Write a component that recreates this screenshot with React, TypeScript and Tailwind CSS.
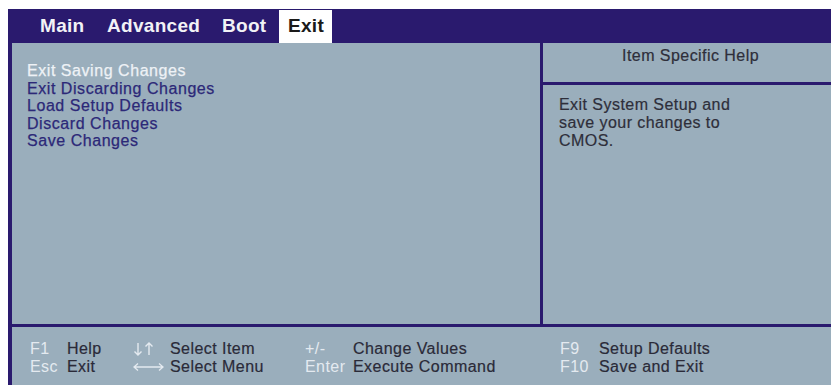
const navy = "bg-[#2a1a6e]"

const menuItems = [
  "Exit Saving Changes",
  "Exit Discarding Changes",
  "Load Setup Defaults",
  "Discard Changes",
  "Save Changes",
]

function UpDown() {
  return (
    <svg width="22" height="14" viewBox="0 0 22 14" fill="none" stroke="#e4eaf0" strokeWidth="1.4">
      <path d="M5 1v12M1.5 9.5L5 13l3.5-3.5" />
      <path d="M16 13V1M12.5 4.5L16 1l3.5 3.5" />
    </svg>
  )
}

function LeftRight() {
  return (
    <svg width="31" height="10" viewBox="0 0 31 10" fill="none" stroke="#e4eaf0" strokeWidth="1.3">
      <path d="M1 5h29M5 1.5L1 5l4 3.5M26 1.5L30 5l-4 3.5" />
    </svg>
  )
}

const keyGroups = [
  { w: "w-[103px]", kw: "w-[37px]", rows: [["F1", "Help"], ["Esc", "Exit"]] },
  { w: "w-[172px]", kw: "w-[37px]", rows: [["ud", "Select Item"], ["lr", "Select Menu"]] },
  { w: "w-[255px]", kw: "w-[48px]", rows: [["+/-", "Change Values"], ["Enter", "Execute Command"]] },
  { w: "w-[220px]", kw: "w-[39px]", rows: [["F9", "Setup Defaults"], ["F10", "Save and Exit"]] },
]

export default function App() {
  return (
    <div className="w-[831px] h-[385px] bg-white pt-[9px] pl-[8px] flex flex-col overflow-hidden font-['Liberation_Sans',Arial,sans-serif]">
      {/* tab bar */}
      <div className={`h-[34px] ${navy} flex items-end pl-[32px] text-[19px] font-bold tracking-[0.3px]`}>
        <div className="flex items-center h-[33px] text-[#f2f2f6]">
          <span className="w-[67px]">Main</span>
          <span className="w-[115px]">Advanced</span>
          <span className="w-[57px]">Boot</span>
        </div>
        <div className="h-[33px] w-[53px] bg-white text-[#1a1a1a] flex items-center pl-[9px]">Exit</div>
      </div>

      <div className="flex-1 flex flex-col border-l-[4px] border-[#2a1a6e] bg-[#9aaebc]">
        {/* main panels */}
        <div className="h-[284px] flex border-b-[3px] border-[#2a1a6e]">
          <div className="w-[528px] pt-[19px] pl-[15px] text-[16px] leading-[17.5px] tracking-[0.55px] text-[#2c2878] [-webkit-text-stroke:0.25px_#2c2878]">
            {menuItems.map((item, i) => (
              <div key={item} className={i === 0 ? "text-[#eef2f6] [-webkit-text-stroke:0.25px_#eef2f6]" : ""}>
                {item}
              </div>
            ))}
          </div>
          <div className="flex-1 border-l-[3px] border-[#2a1a6e] text-[16px] tracking-[0.45px] text-[#2e2e3a] [-webkit-text-stroke:0.2px_#2e2e3a]">
            <div className="h-[42px] border-b-[3px] border-[#2a1a6e] pl-[79px] pt-[4px] leading-[18px]">
              Item Specific Help
            </div>
            <div className="pl-[16px] pt-[11px] leading-[18px]">
              <div>Exit System Setup and</div>
              <div>save your changes to</div>
              <div>CMOS.</div>
            </div>
          </div>
        </div>

        {/* key help footer */}
        <div className="flex pl-[18px] pt-[13px] text-[16px] leading-[18px] tracking-[0.45px]">
          {keyGroups.map((g, gi) => (
            <div key={gi} className={`${g.w} flex flex-col`}>
              {g.rows.map(([k, label]) => (
                <div key={k} className="flex items-center h-[18px]">
                  <span className={`${g.kw} text-[#e4eaf0] flex items-center`}>
                    {k === "ud" ? <UpDown /> : k === "lr" ? <LeftRight /> : k}
                  </span>
                  <span className="text-[#2a2a38] [-webkit-text-stroke:0.2px_#2a2a38]">{label}</span>
                </div>
              ))}
            </div>
          ))}
        </div>
      </div>
    </div>
  )
}
